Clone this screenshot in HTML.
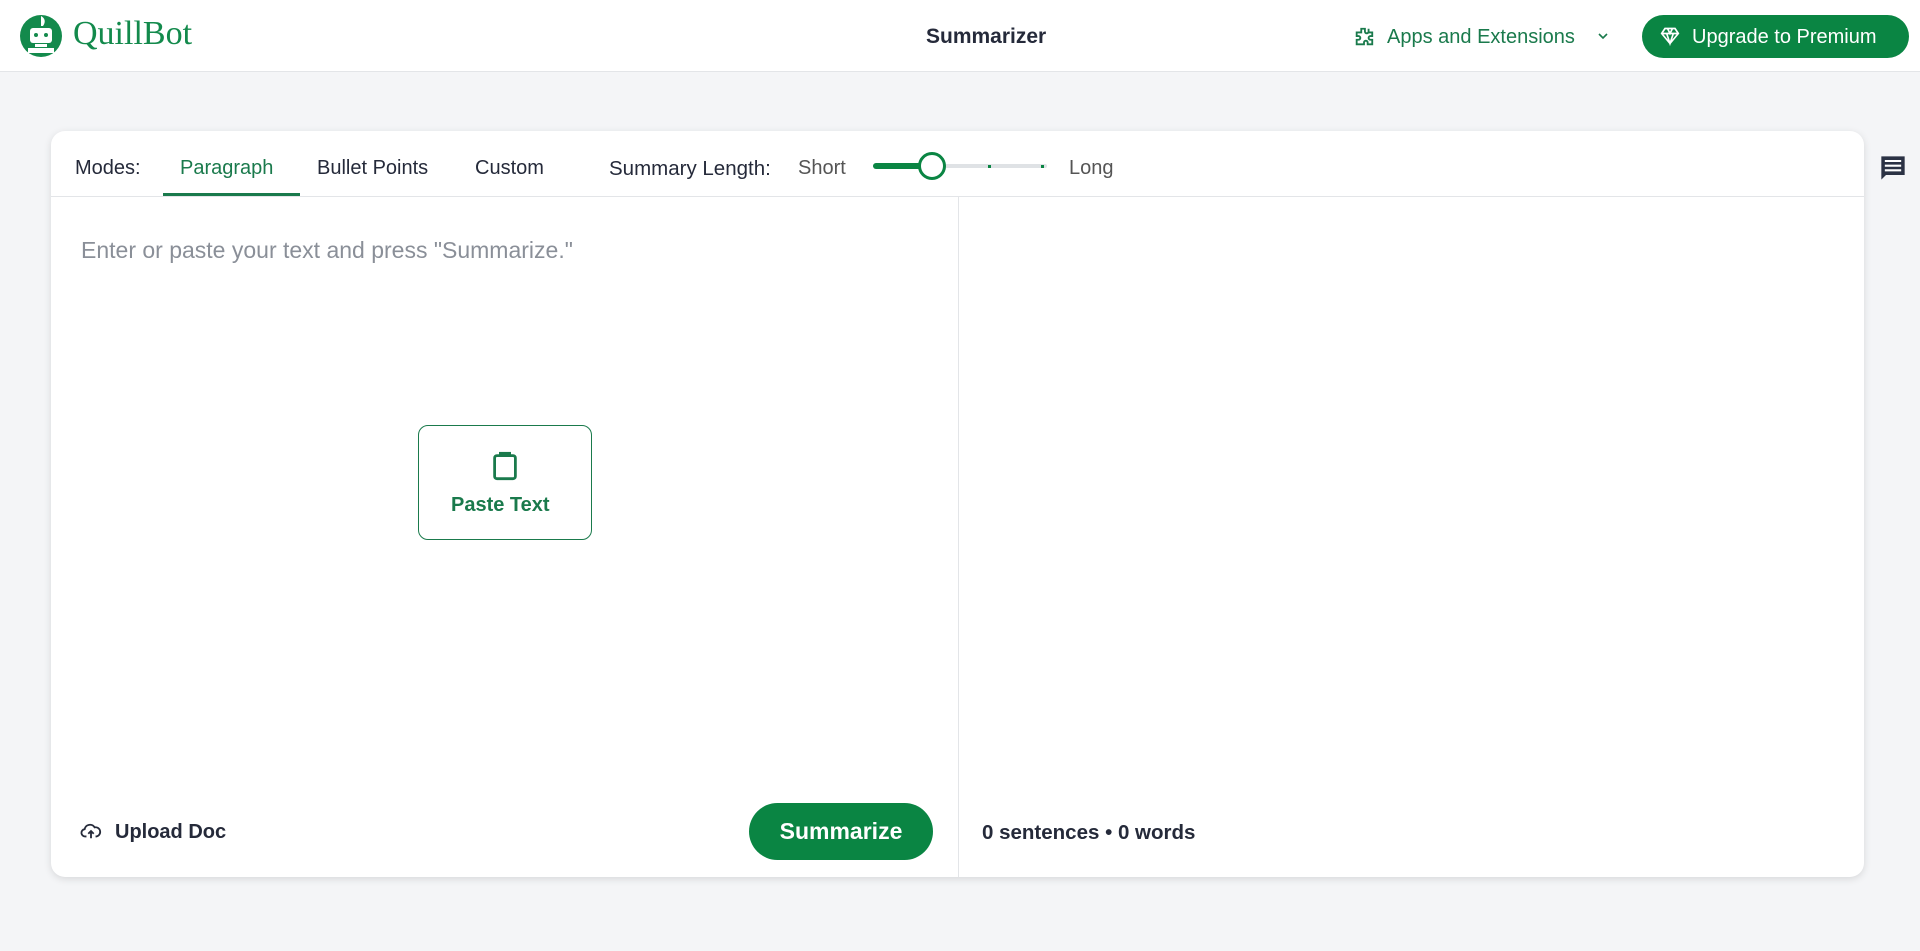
<!DOCTYPE html>
<html><head><meta charset="utf-8"><style>
*{box-sizing:border-box;margin:0;padding:0}
body{width:1920px;height:951px;background:#f4f5f7;font-family:"Liberation Sans",sans-serif;position:relative;overflow:hidden;color:#252a3a}
.hdr{position:absolute;left:0;top:0;width:1920px;height:72px;background:#fff;border-bottom:1px solid #e3e5e8}
.abs{position:absolute;white-space:nowrap}
.card{position:absolute;left:51px;top:131px;width:1813px;height:746px;background:#fff;border-radius:14px;box-shadow:0 2px 8px rgba(0,0,0,.12)}
.green{color:#1a7a4c}
</style></head><body>
<div class="hdr">
  <svg class="abs" style="left:19px;top:13px" width="44" height="46" viewBox="0 0 44 46">
    <circle cx="22" cy="23" r="21" fill="#138a4c"/>
    <path d="M22 3 C26 5 27 9 24 13 L22 13 Z" fill="#fff"/>
    <rect x="11" y="15" width="22" height="15" rx="3" fill="#fff"/>
    <circle cx="17" cy="22" r="2" fill="#138a4c"/><circle cx="27" cy="22" r="2" fill="#138a4c"/>
    <rect x="16" y="31" width="12" height="3" fill="#fff"/>
    <rect x="9" y="35" width="26" height="5" fill="#fff"/>
  </svg>
  <div class="abs" style="left:73px;top:15px;font-family:'Liberation Serif',serif;font-size:34px;color:#138a4c">QuillBot</div>
  <div class="abs" style="left:926px;top:25px;font-size:21px;font-weight:bold;color:#252a3a">Summarizer</div>
  <svg class="abs" style="left:1353px;top:26px" width="22" height="22" viewBox="0 0 24 24" fill="none" stroke="#1a7a4c" stroke-width="2"><path d="M9 3h4v3a2 2 0 1 0 4 0V3h0v4h4v4h-2a2 2 0 1 0 0 4h2v5h-5v-2a2 2 0 1 0-4 0v2H4v-5h2a2 2 0 1 0 0-4H4V7h5z"/></svg>
  <div class="abs green" style="left:1387px;top:26px;font-size:20px">Apps and Extensions</div>
  <svg class="abs" style="left:1597px;top:31px" width="12" height="10" viewBox="0 0 12 10"><path d="M2 3l4 4 4-4" stroke="#1a7a4c" stroke-width="1.6" fill="none"/></svg>
  <div class="abs" style="left:1642px;top:15px;width:267px;height:43px;border-radius:22px;background:#0a8543"></div>
  <svg class="abs" style="left:1660px;top:26px" width="20" height="20" viewBox="0 0 24 24" fill="none" stroke="#fff" stroke-width="2"><path d="M6 3h12l4 6-10 12L2 9z M2 9h20 M9 3l3 6 3-6 M8 9l4 12 4-12"/></svg>
  <div class="abs" style="left:1692px;top:26px;font-size:20px;color:#fff">Upgrade to Premium</div>
</div>
<svg class="abs" style="left:1879px;top:154px" width="28" height="28" viewBox="0 0 24 24"><path d="M2 2h20v16H6l-4 4z" fill="#2b3244"/><path d="M5 6h14M5 10h14M5 14h14" stroke="#fff" stroke-width="1.8"/></svg>
<div class="card">
  <div class="abs" style="left:0;top:65px;width:1813px;height:1px;background:#e3e5e8"></div>
  <div class="abs" style="left:907px;top:66px;width:1px;height:680px;background:#e3e5e8"></div>
  <div class="abs" style="left:24px;top:26px;font-size:20px;color:#252a3a">Modes:</div>
  <div class="abs green" style="left:129px;top:26px;font-size:20px">Paragraph</div>
  <div class="abs" style="left:112px;top:62px;width:137px;height:3px;background:#1a7a4c"></div>
  <div class="abs" style="left:266px;top:26px;font-size:20px">Bullet Points</div>
  <div class="abs" style="left:424px;top:26px;font-size:20px">Custom</div>
  <div class="abs" style="left:558px;top:26px;font-size:20.5px">Summary Length:</div>
  <div class="abs" style="left:747px;top:26px;font-size:20px;color:#555">Short</div>
  <div class="abs" style="left:822px;top:33px;width:174px;height:4px;border-radius:2px;background:#dfe2e5"></div>
  <div class="abs" style="left:822px;top:32px;width:58px;height:6px;border-radius:3px;background:#0a8543"></div>
  <div class="abs" style="left:867px;top:21px;width:28px;height:28px;border-radius:50%;background:#fff;border:3px solid #0a8543"></div>
  <div class="abs" style="left:937px;top:34px;width:3px;height:3px;background:#0a8543"></div>
  <div class="abs" style="left:990px;top:34px;width:3px;height:3px;background:#0a8543"></div>
  <div class="abs" style="left:1018px;top:26px;font-size:20px;color:#555">Long</div>
  <div class="abs" style="left:30px;top:106px;font-size:23px;color:#8a8f98">Enter or paste your text and press "Summarize."</div>
  <div class="abs" style="left:367px;top:294px;width:174px;height:115px;border:1.5px solid #1a7a4c;border-radius:10px"></div>
  <svg class="abs" style="left:440px;top:320px" width="28" height="30" viewBox="0 0 24 26" fill="none" stroke="#1a7a4c" stroke-width="2.4"><rect x="3" y="4" width="18" height="20" rx="2"/><path d="M8 4V2h8v2z" fill="#1a7a4c"/></svg>
  <div class="abs green" style="left:400px;top:363px;font-size:20px;font-weight:bold">Paste Text</div>
  <svg class="abs" style="left:29px;top:690px" width="22" height="20" viewBox="0 0 24 22" fill="none" stroke="#252a3a" stroke-width="2"><path d="M7 17H6a4 4 0 0 1-1-8 6 6 0 0 1 11-2 4 4 0 0 1 2 10h-1 M12 19v-8 M9 14l3-3 3 3"/></svg>
  <div class="abs" style="left:64px;top:690px;font-size:20px;font-weight:bold">Upload Doc</div>
  <div class="abs" style="left:698px;top:672px;width:184px;height:57px;border-radius:29px;background:#0a8543"></div>
  <div class="abs" style="left:698px;top:687px;width:184px;text-align:center;font-size:23px;font-weight:bold;color:#fff">Summarize</div>
  <div class="abs" style="left:931px;top:690px;font-size:20.5px;font-weight:bold">0 sentences • 0 words</div>
</div>
</body></html>
